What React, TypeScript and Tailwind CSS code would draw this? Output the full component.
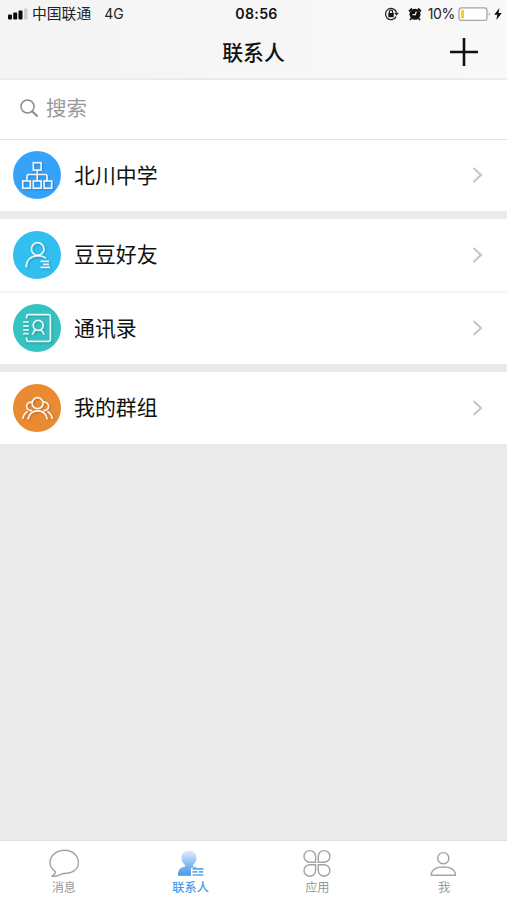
import { ReactNode } from "react";
import { clsx } from "clsx";

const OrgIcon = () => (
  <>
    <rect x="20.3" y="11.7" width="7.8" height="7.4" />
    <rect x="9.7" y="30" width="7.6" height="7.2" />
    <rect x="20.3" y="30" width="7.8" height="7.2" />
    <rect x="31.1" y="30" width="7.6" height="7.2" />
    <path d="M24.2 19.1V30M14 30v-5q0-1.5 1.5-1.5h17q1.5 0 1.5 1.5v5" />
  </>
);

const FriendIcon = () => (
  <>
    <circle cx="24.7" cy="18" r="6.3" />
    <path d="M13.2 36.6C13.2 29.5 17.6 25 24.7 24.6C28.6 24.6 31 25.6 33 27.2" />
    <path d="M27.5 30.300h8.500M30 33.300h6M27.500 36.300h9.500" />
  </>
);

const BookIcon = () => (
  <>
    <path d="M13.6 14.6v-2.3q0-1.6 1.6-1.6h20.6q1.6 0 1.6 1.6v23.4q0 1.6-1.6 1.6H15.2q-1.6 0-1.6-1.6v-2.3" />
    <path d="M10.2 18h5.6M10.2 21.9h5.6M10.2 25.8h5.6M10.2 29.7h5.6" />
    <circle cx="25.2" cy="21.4" r="5" />
    <path d="M19.4 30.8q.8-3.4 3.4-5M27.6 25.8q2.6 1.600 3.5 5" />
  </>
);

const GroupIcon = () => (
  <>
    <circle cx="24.6" cy="19.2" r="5.5" />
    <path d="M19.2 18.4a4.2 4.2 0 1 0-.2 8M30 18.4a4.2 4.2 0 1 1 .2 8" />
    <path d="M15 35.300c1-5.200 4.600-8.400 9.600-8.400s8.700 3.200 9.700 8.400" />
    <path d="M9.700 34.800c.6-3.200 2.200-5.700 5-7.200M39.400 34.800c-.6-3.200-2.200-5.700-5-7.200" />
  </>
);

const groups = [
  [{ label: "北川中学", icon: OrgIcon, bg: "bg-[#36a3fa]", height: "h-[71px]" }],
  [
    { label: "豆豆好友", icon: FriendIcon, bg: "bg-[#30bfee]", height: "h-[72px]" },
    { label: "通讯录", icon: BookIcon, bg: "bg-[#35c2c3]", height: "h-[71px]" },
  ],
  [{ label: "我的群组", icon: GroupIcon, bg: "bg-[#ea8b34]", height: "h-[72px]" }],
];

function StatusBar() {
  return (
    <div className="grid h-7 grid-cols-3 items-center text-[14px] leading-none text-[#222]">
      <div className="flex items-center pl-2">
        <svg width="20" height="12" viewBox="0 0 20 12" fill="#0a0a0a">
          <rect x="0" y="6.500" width="4" height="5" rx="1" />
          <rect x="5.200" y="4.500" width="4" height="7" rx="1" />
          <rect x="10.500" y="2.500" width="4" height="9" rx="1" />
          <rect x="16" y="0.500" width="3.500" height="11" rx="1" fill="#cfcfcf" />
        </svg>
        <span className="ml-1 pb-px text-[14.800px]">中国联通</span>
        <span className="ml-[13px] font-[Inter]">4G</span>
      </div>
      <div className="pl-[6px] text-center font-[Inter] text-[14.200px] font-semibold tracking-[0.300px] text-[#111]">08:56</div>
      <div className="flex items-center justify-end pb-px pr-[5px]">
        <svg width="15" height="14" viewBox="0 0 15 14" fill="none" stroke="#222" strokeWidth="1.300">
          <path d="M12.100 9.600A5.600 5.600 0 1 1 12.500 5.500" />
          <path d="M10.200 5.800h4.600l-2.300 3z" fill="#222" stroke="none" />
          <rect x="4.300" y="6" width="5.400" height="4.200" fill="#111" stroke="none" />
          <path d="M5.400 6V4.800a1.600 1.600 0 0 1 3.200 0V6" />
        </svg>
        <svg className="ml-[9px]" width="14" height="14" viewBox="0 0 14 14">
          <circle cx="7" cy="7.300" r="5.500" fill="#111" />
          <path d="M1 4.300 4 1.500M13 4.300 10 1.500M3.200 11.500 2 13M10.800 11.500 12 13" stroke="#111" strokeWidth="1.800" />
          <path d="M8.300 4.500 7.300 7.700H4.500" fill="none" stroke="#f8f8f8" strokeWidth="1.200" />
        </svg>
        <span className="ml-[6px] pt-px font-[Inter] tracking-[-0.300px]">10%</span>
        <svg className="ml-[3px]" width="33" height="14" viewBox="0 0 33 14">
          <rect x="1" y=".8" width="28" height="12.600" rx="2.500" fill="#fff" stroke="#a5a5a5" strokeWidth="1.300" />
          <rect x="3" y="2.800" width="3" height="8.600" rx=".8" fill="#fbcf1c" />
          <path d="M30.800 4.800q2 2.200 0 4.400z" fill="#a5a5a5" />
        </svg>
        <svg className="ml-[3px]" width="8" height="12" viewBox="0 0 8 12">
          <path d="M5.400 0 .2 6.800h3L2.400 12 7.800 5H4.600z" fill="#111" />
        </svg>
      </div>
    </div>
  );
}

function Row({ label, bg, height, children }: { label: string; bg: string; height: string; children: ReactNode }) {
  return (
    <div className={clsx("flex items-center bg-white pb-px pl-[13px] pr-[24px]", height)}>
      <div className={clsx("size-12 shrink-0 rounded-full", bg)}>
        <svg
          className="drop-shadow-[1px_1px_1px_rgba(0,0,0,0.250)]"
          width="48"
          height="48"
          viewBox="0 0 48 48"
          fill="none"
          stroke="#fff"
          strokeOpacity=".9"
          strokeWidth="1.700"
        >
          {children}
        </svg>
      </div>
      <span className="ml-[13px] flex-1 pb-[2px] text-[20.900px] leading-none text-[#111]">{label}</span>
      <svg width="11" height="16" viewBox="0 0 11 16" fill="none" stroke="#c4c4c6" strokeWidth="2">
        <path d="M1.500 1 9 8l-7.500 7" />
      </svg>
    </div>
  );
}

const tabs = [
  {
    label: "消息",
    icon: (
      <path
        transform="translate(1 .3)"
        d="M5.500 22.700C2.600 20.500 1 17.700 1 14.300C1 7.400 7.300 2 15.500 2S29.500 7.400 29.500 14.300S23.200 25.200 15 25.200C12.800 25.200 11 26.800 8.500 27.500C6.500 28 4.500 28.200 2.600 28C4.500 27.200 6.300 25 6.400 23.400Z"
      />
    ),
  },
  {
    label: "联系人",
    active: true,
    icon: (
      <>
        <defs>
          <linearGradient id="person" x1="0" y1="2" x2="0" y2="28" gradientUnits="userSpaceOnUse">
            <stop offset="0" stopColor="#e2effd" />
            <stop offset=".5" stopColor="#8fc0f4" />
            <stop offset="1" stopColor="#4795e6" />
          </linearGradient>
        </defs>
        <path
          d="M14 2.500c4.800 0 7.500 3.300 7.500 7.500 0 3-1.300 5.300-3.500 6.900v1.600c2.300.3 3.500.7 4.500 1.300H16V27.800H3C3 22 5 19.200 10 18.400v-1.500C7.800 15.300 6.500 13 6.500 10c0-4.200 2.700-7.500 7.500-7.500Z"
          fill="url(#person)"
          stroke="none"
        />
        <path d="M17.500 20.800h11M17.500 23.900h5M24 23.900h4M17.500 27h11" stroke="#62a5ec" strokeWidth="1.700" />
      </>
    ),
  },
  {
    label: "应用",
    icon: (
      <g transform="translate(.6 0)">
        <path d="M14 14.200H8.200a5.800 5.800 0 1 1 5.800-5.800Z" />
        <path d="M16.700 14.200V8.400a5.800 5.800 0 1 1 5.800 5.800Z" />
        <path d="M14 16.700v5.800a5.800 5.800 0 1 1-5.800-5.800Z" />
        <path d="M16.700 16.700h5.800a5.800 5.800 0 1 1-5.800 5.800Z" />
      </g>
    ),
  },
  {
    label: "我",
    icon: (
      <>
        <circle cx="15.300" cy="10.200" r="5.600" />
        <path d="M3.300 27.300V25.500C4.300 21.500 9 19 15.300 19S26.400 21.500 27.400 25.500V27.300Z" />
      </>
    ),
  },
];

export default function App() {
  return (
    <div className="flex h-[900px] w-[507px] flex-col overflow-hidden bg-[#eaeaea] font-['Noto_Sans_CJK_SC',sans-serif]">
      <header className="h-20 border-b-2 border-[#ebebeb] bg-gradient-to-r from-[#f4f4f4] to-[#f9f9f9]">
        <StatusBar />
        <div className="grid h-12 grid-cols-3 items-center">
          <span />
          <h1 className="pb-[2px] text-center text-[20.900px] font-medium leading-none text-[#111]">联系人</h1>
          <button className="mr-[29px] justify-self-end">
            <svg width="28" height="28" viewBox="0 0 28 28" stroke="#111" strokeWidth="2.600">
              <path d="M14 0v28M0 14h28" />
            </svg>
          </button>
        </div>
      </header>

      <div className="flex h-[60px] items-center border-b border-[#e3e3e3] bg-white pb-[3px] pl-5">
        <svg width="19" height="19" viewBox="0 0 19 19" fill="none" stroke="#8c8c8c" strokeWidth="1.500">
          <circle cx="7.500" cy="7.500" r="6.500" />
          <path d="m12.200 12.200 5.300 5.300" strokeWidth="2" />
        </svg>
        <span className="ml-[7px] pb-px text-[20.500px] leading-none text-[#989898]">搜索</span>
      </div>

      <main className="flex flex-1 flex-col gap-2">
        {groups.map((items, i) => (
          <section key={i} className="divide-y-2 divide-[#f4f4f4]">
            {items.map(({ label, icon: Icon, bg, height }, j) => (
              <div key={j}>
                <Row label={label} bg={bg} height={height}>
                  <Icon />
                </Row>
              </div>
            ))}
          </section>
        ))}
      </main>

      <nav className="grid h-[60px] grid-cols-4 border-t border-[#dedede] bg-white">
        {tabs.map((tab) => (
          <div key={tab.label} className="flex flex-col items-center pt-[7px]">
            <svg width="31" height="31" viewBox="0 0 31 31" fill="none" stroke="#a3a3a3" strokeWidth="1.400">
              {tab.icon}
            </svg>
            <span
              className={clsx(
                "mt-[2px] pl-px text-[12.200px] leading-none",
                tab.active ? "font-medium text-[#4f9bea]" : "text-[#999]"
              )}
            >
              {tab.label}
            </span>
          </div>
        ))}
      </nav>
    </div>
  );
}
